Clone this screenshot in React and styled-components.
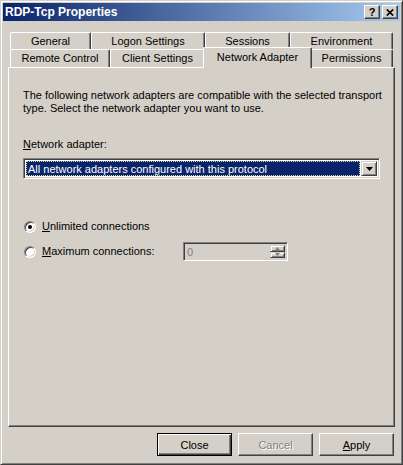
import styled, { createGlobalStyle } from 'styled-components';

const GlobalStyle = createGlobalStyle`
  html, body {
    margin: 0;
    padding: 0;
    background: #d4d0c8;
  }
`;

const Window = styled.div`
  width: 403px;
  height: 465px;
  box-sizing: border-box;
  background: #d4d0c8;
  border: 1px solid;
  border-color: #d4d0c8 #404040 #404040 #d4d0c8;
  box-shadow: inset 1px 1px #fff, inset -1px -1px #808080;
  padding: 2px;
  display: flex;
  flex-direction: column;
  font-family: "Liberation Sans", Arial, sans-serif;
  font-size: 11px;
  color: #000;
`;

const TitleBar = styled.div`
  height: 18px;
  flex: none;
  display: flex;
  align-items: center;
  padding: 0 2px 0 2px;
  background: linear-gradient(to right, #0a246a, #a6caf0);
`;

const TitleText = styled.div`
  flex: 1;
  color: #fff;
  font-weight: bold;
  font-size: 12px;
  line-height: 18px;
  white-space: nowrap;
`;

const CaptionButton = styled.div`
  width: 16px;
  height: 14px;
  box-sizing: border-box;
  margin-left: ${p => p.$gap || 0}px;
  background: #d4d0c8;
  border: 1px solid;
  border-color: #fff #404040 #404040 #fff;
  box-shadow: inset -1px -1px #808080;
  display: flex;
  align-items: center;
  justify-content: center;
  font-weight: bold;
  font-size: 11px;
  line-height: 12px;
`;

const Body = styled.div`
  flex: 1;
  display: flex;
  flex-direction: column;
  padding: 11px 5px 6px 5px;
  min-height: 0;
`;

const TabStrip = styled.div`
  padding: 0 2px;
  display: flex;
  flex-direction: column;
`;

const TabRow = styled.div`
  display: flex;
  height: ${p => p.$h}px;
`;

const Tab = styled.div`
  width: ${p => p.$w}px;
  flex: none;
  box-sizing: border-box;
  border-top: 1px solid #fff;
  border-left: 1px solid #fff;
  border-right: 1px solid #404040;
  border-radius: 2px 2px 0 0;
  box-shadow: inset -1px 0 #808080;
  background: #d4d0c8;
  display: flex;
  align-items: center;
  justify-content: center;
  white-space: nowrap;
  padding-bottom: 1px;
`;

const ActiveTab = styled(Tab)`
  position: relative;
  z-index: 1;
  width: ${p => p.$w + 4}px;
  margin: -2px -2px -1px -2px;
  padding-bottom: 3px;
`;

const Panel = styled.div`
  flex: 1;
  box-sizing: border-box;
  border: 1px solid;
  border-color: #fff #404040 #404040 #fff;
  box-shadow: inset -1px -1px #808080;
  padding: 21px 14px 0 14px;
  display: flex;
  flex-direction: column;
`;

const Text = styled.div`
  line-height: 13px;
  white-space: nowrap;
  margin-top: ${p => p.$mt || 0}px;
`;

const Combo = styled.div`
  margin-top: 7px;
  width: 357px;
  height: 21px;
  box-sizing: border-box;
  border: 1px solid;
  border-color: #808080 #fff #fff #808080;
  box-shadow: inset 1px 1px #404040, inset -1px -1px #d4d0c8;
  background: #fff;
  padding: 2px;
  display: flex;
`;

const Selection = styled.div`
  flex: 1;
  margin: 0 1px 0 0;
  background: #0a246a;
  color: #fff;
  box-sizing: border-box;
  border: 1px dotted #d8d8a0;
  line-height: 14px;
  padding-left: 1px;
  white-space: nowrap;
  overflow: hidden;
`;

const ArrowButton = styled.div`
  width: ${p => p.$w}px;
  flex: ${p => (p.$grow ? 1 : 'none')};
  box-sizing: border-box;
  background: #d4d0c8;
  border: 1px solid;
  border-color: #d4d0c8 #404040 #404040 #d4d0c8;
  box-shadow: inset 1px 1px #fff, inset -1px -1px #808080;
  display: flex;
  align-items: center;
  justify-content: center;
`;

const RadioRow = styled.div`
  display: flex;
  align-items: center;
  height: ${p => p.$h}px;
  margin-top: ${p => p.$mt}px;
  padding-left: 1px;
`;

const RadioCircle = styled.div`
  width: 12px;
  height: 12px;
  box-sizing: border-box;
  border-radius: 50%;
  border: 1px solid;
  border-color: #808080 #fff #fff #808080;
  box-shadow: inset 1px 1px #404040, inset -1px -1px #d4d0c8;
  background: #fff;
  display: flex;
  align-items: center;
  justify-content: center;
  flex: none;
`;

const Dot = styled.div`
  width: 4px;
  height: 4px;
  border-radius: 50%;
  background: #000;
`;

const RadioLabel = styled.div`
  margin-left: 6px;
  width: ${p => (p.$w ? `${p.$w}px` : 'auto')};
  white-space: nowrap;
  line-height: 13px;
`;

const SpinBox = styled.div`
  width: 105px;
  height: 19px;
  box-sizing: border-box;
  border: 1px solid;
  border-color: #808080 #fff #fff #808080;
  box-shadow: inset 1px 1px #404040, inset -1px -1px #d4d0c8;
  background: #d4d0c8;
  padding: 2px 2px 2px 3px;
  display: flex;
  color: #808080;
`;

const SpinValue = styled.div`
  flex: 1;
  line-height: 15px;
`;

const SpinButtons = styled.div`
  width: 15px;
  display: flex;
  flex-direction: column;
`;

const ButtonRow = styled.div`
  display: flex;
  justify-content: flex-end;
  gap: 6px;
  margin-top: 6px;
  padding-right: 1px;
`;

const Button = styled.div`
  width: 75px;
  height: 23px;
  box-sizing: border-box;
  background: #d4d0c8;
  border: 1px solid;
  border-color: ${p => (p.$default ? '#000' : '#fff #404040 #404040 #fff')};
  box-shadow: ${p =>
    p.$default
      ? 'inset 1px 1px #fff, inset -1px -1px #404040, inset -2px -2px #808080'
      : 'inset -1px -1px #808080'};
  display: flex;
  align-items: center;
  justify-content: center;
  color: ${p => (p.$disabled ? '#808080' : '#000')};
  text-shadow: ${p => (p.$disabled ? '1px 1px #fff' : 'none')};
`;

const U = styled.span`
  text-decoration: underline;
`;

const DownArrow = ({ color = '#000' }) => (
  <svg width="7" height="4" viewBox="0 0 7 4">
    <path d="M0 0h7L3.5 4z" fill={color} />
  </svg>
);

const SmallArrow = ({ up }) => (
  <svg width="5" height="3" viewBox="0 0 5 3">
    <path d={up ? 'M0 3h5L2.5 0z' : 'M0 0h5L2.5 3z'} fill="#808080" />
  </svg>
);

const CloseGlyph = () => (
  <svg width="8" height="7" viewBox="0 0 8 7">
    <path d="M0.8 0.5L7.2 6.5M7.2 0.5L0.8 6.5" stroke="#000" strokeWidth="1.7" />
  </svg>
);

const backTabs = [
  { label: 'General', w: 81 },
  { label: 'Logon Settings', w: 114 },
  { label: 'Sessions', w: 85 },
  { label: 'Environment', w: 103 },
];

const frontTabs = [
  { label: 'Remote Control', w: 100 },
  { label: 'Client Settings', w: 95 },
  { label: 'Network Adapter', w: 105, active: true },
  { label: 'Permissions', w: 83 },
];

export default function App() {
  return (
    <>
      <GlobalStyle />
      <Window>
        <TitleBar>
          <TitleText>RDP-Tcp Properties</TitleText>
          <CaptionButton>?</CaptionButton>
          <CaptionButton $gap={2}>
            <CloseGlyph />
          </CaptionButton>
        </TitleBar>
        <Body>
          <TabStrip>
            <TabRow $h={17}>
              {backTabs.map(t => (
                <Tab key={t.label} $w={t.w}>{t.label}</Tab>
              ))}
            </TabRow>
            <TabRow $h={18}>
              {frontTabs.map(t =>
                t.active ? (
                  <ActiveTab key={t.label} $w={t.w}>{t.label}</ActiveTab>
                ) : (
                  <Tab key={t.label} $w={t.w}>{t.label}</Tab>
                )
              )}
            </TabRow>
          </TabStrip>
          <Panel>
            <Text>
              The following network adapters are compatible with the selected transport
              <br />
              type. Select the network adapter you want to use.
            </Text>
            <Text $mt={23}>
              <U>N</U>etwork adapter:
            </Text>
            <Combo>
              <Selection>All network adapters configured with this protocol</Selection>
              <ArrowButton $w={16}>
                <DownArrow />
              </ArrowButton>
            </Combo>
            <RadioRow $h={13} $mt={41}>
              <RadioCircle>
                <Dot />
              </RadioCircle>
              <RadioLabel>
                <U>U</U>nlimited connections
              </RadioLabel>
            </RadioRow>
            <RadioRow $h={19} $mt={9}>
              <RadioCircle />
              <RadioLabel $w={141}>
                <U>M</U>aximum connections:
              </RadioLabel>
              <SpinBox>
                <SpinValue>0</SpinValue>
                <SpinButtons>
                  <ArrowButton $grow>
                    <SmallArrow up />
                  </ArrowButton>
                  <ArrowButton $grow>
                    <SmallArrow />
                  </ArrowButton>
                </SpinButtons>
              </SpinBox>
            </RadioRow>
          </Panel>
          <ButtonRow>
            <Button $default>Close</Button>
            <Button $disabled>Cancel</Button>
            <Button>
              <span>
                <U>A</U>pply
              </span>
            </Button>
          </ButtonRow>
        </Body>
      </Window>
    </>
  );
}
